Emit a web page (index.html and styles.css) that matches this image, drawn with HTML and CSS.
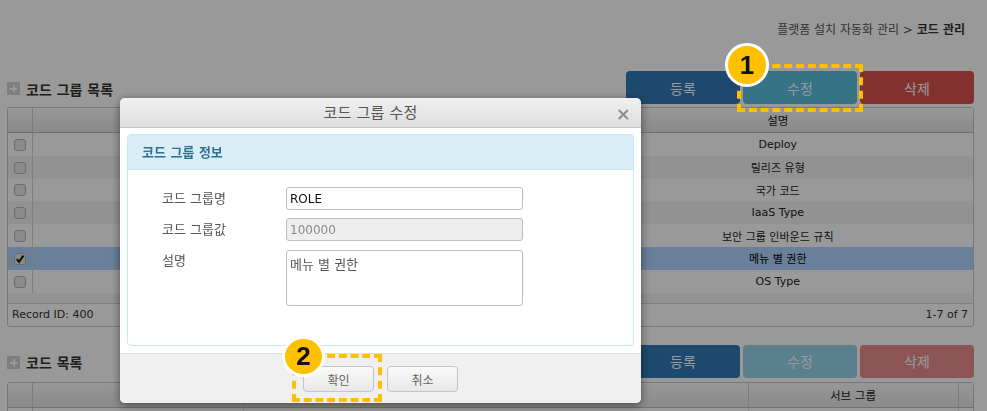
FILE: index.html
```html
<!DOCTYPE html>
<html lang="ko">
<head>
  <meta charset="UTF-8">
  <title>코드 관리</title>
  <link rel="stylesheet" href="styles.css">
</head>
<body>

  <div class="page">
    <div class="breadcrumb">플랫폼 설치 자동화 관리 &gt; <b>코드 관리</b></div>

    <div class="section-head">
      <h2 class="section-title"><span class="plus"></span>코드 그룹 목록</h2>
      <div class="btn-group">
        <button class="btn btn-add">등록</button>
        <button class="btn btn-edit">수정</button>
        <button class="btn btn-del">삭제</button>
      </div>
    </div>

    <div class="grid">
      <table class="grid-table">
        <colgroup>
          <col class="col-check"><col class="col-name"><col class="col-value"><col class="col-desc">
        </colgroup>
        <thead>
          <tr><th></th><th></th><th></th><th>설명</th></tr>
        </thead>
        <tbody>
          <tr><td><span class="check"></span></td><td></td><td></td><td>Deploy</td></tr>
          <tr class="alt"><td><span class="check"></span></td><td></td><td></td><td>릴리즈 유형</td></tr>
          <tr><td><span class="check"></span></td><td></td><td></td><td>국가 코드</td></tr>
          <tr class="alt"><td><span class="check"></span></td><td></td><td></td><td>IaaS Type</td></tr>
          <tr><td><span class="check"></span></td><td></td><td></td><td>보안 그룹 인바운드 규칙</td></tr>
          <tr class="selected">
            <td>
              <span class="check">
                <svg viewBox="0 0 12 12" width="12" height="12"><path d="M2.8 6.2 5 8.8 9.4 2.6" fill="none" stroke="#111" stroke-width="2"/></svg>
              </span>
            </td>
            <td></td><td></td><td>메뉴 별 권한</td>
          </tr>
          <tr><td><span class="check"></span></td><td></td><td></td><td>OS Type</td></tr>
        </tbody>
      </table>
      <div class="grid-filler"></div>
      <div class="grid-footer"><span>Record ID: 400</span><span>1-7 of 7</span></div>
    </div>

    <div class="section-head section-second">
      <h2 class="section-title"><span class="plus"></span>코드 목록</h2>
      <div class="btn-group">
        <button class="btn btn-add">등록</button>
        <button class="btn btn-edit btn-off">수정</button>
        <button class="btn btn-del btn-off">삭제</button>
      </div>
    </div>

    <div class="grid">
      <table class="grid-table">
        <colgroup>
          <col class="col-check"><col class="col-code"><col class="col-code-name"><col class="col-sub"><col class="col-scroll">
        </colgroup>
        <thead>
          <tr><th></th><th></th><th></th><th>서브 그룹</th><th></th></tr>
        </thead>
        <tbody>
          <tr><td></td><td></td><td></td><td></td><td></td></tr>
        </tbody>
      </table>
    </div>
  </div>

  <div class="overlay"></div>

  <div class="modal">
    <div class="modal-title">코드 그룹 수정<span class="modal-close">&times;</span></div>
    <div class="modal-body">
      <div class="panel">
        <div class="panel-head">코드 그룹 정보</div>
        <div class="panel-body">
          <div class="field">
            <label>코드 그룹명</label>
            <input type="text" class="input" value="ROLE">
          </div>
          <div class="field">
            <label>코드 그룹값</label>
            <input type="text" class="input" value="100000" disabled>
          </div>
          <div class="field">
            <label>설명</label>
            <textarea class="input input-area">메뉴 별 권한</textarea>
          </div>
        </div>
      </div>
    </div>
    <div class="modal-foot">
      <button class="btn-plain">확인</button>
      <button class="btn-plain">취소</button>
    </div>
  </div>

  <div class="mark mark-one"></div>
  <div class="badge badge-one">1</div>
  <div class="mark mark-two"></div>
  <div class="badge badge-two">2</div>

</body>
</html>
```

FILE: styles.css
```css
html, body {
  height: 100%;
  margin: 0;
  overflow: hidden;
}
body {
  font-family: "DejaVu Sans", "Noto Sans CJK KR", sans-serif;
  font-size: 11px;
  color: #333;
  background: #fff;
}
.page {
  box-sizing: border-box;
  height: 100%;
  overflow: hidden;
  padding: 22px 13px 0 7px;
}
.breadcrumb {
  height: 16px;
  line-height: 17px;
  font-size: 12px;
  text-align: right;
  padding-right: 9px;
  color: #555;
}
.breadcrumb b {
  color: #333;
}
.section-head {
  display: flex;
  justify-content: space-between;
  align-items: center;
  margin-top: 33px;
  margin-bottom: 3px;
}
.section-second {
  margin-top: 18px;
  margin-bottom: 4px;
}
.section-title {
  display: flex;
  align-items: center;
  gap: 6px;
  margin: 0;
  font-size: 14px;
  font-weight: 700;
  color: #333;
  padding-top: 2px;
}
.plus {
  position: relative;
  width: 13px;
  height: 13px;
  background: #d2d2d2;
}
.plus::before,
.plus::after {
  content: "";
  position: absolute;
  background: #fff;
}
.plus::before {
  left: 3px;
  top: 6px;
  width: 7px;
  height: 2px;
}
.plus::after {
  left: 6px;
  top: 3px;
  width: 2px;
  height: 7px;
}
.btn-group {
  display: flex;
  gap: 3px;
}
.btn {
  width: 114px;
  height: 33px;
  padding: 0;
  border: 1px solid transparent;
  border-radius: 4px;
  font-family: inherit;
  font-size: 14px;
  color: #fff;
}
.btn-add {
  background: #337ab7;
}
.btn-edit {
  background: #5bc0de;
}
.btn-del {
  background: #d9534f;
}
.btn-off {
  opacity: 0.65;
}
.grid {
  border: 1px solid #c9c9c9;
  border-radius: 3px;
  background: #fff;
}
.grid-table {
  width: 100%;
  table-layout: fixed;
  border-collapse: collapse;
}
.col-check {
  width: 24px;
}
.col-name {
  width: 270px;
}
.col-value {
  width: 280px;
}
.col-code {
  width: 211px;
}
.col-code-name {
  width: 505px;
}
.col-sub {
  width: 210px;
}
.grid-table th {
  height: 24px;
  padding: 0;
  font-size: 11.5px;
  font-weight: 400;
  color: #111;
  background: linear-gradient(#fcfcfc, #e6e6e6);
  border-right: 1px solid #cfcfcf;
  border-bottom: 1px solid #bdbdbd;
}
.grid-table th:last-child {
  border-right: 0;
}
.grid-table td {
  height: 22.8px;
  padding: 0;
  text-align: center;
  color: #222;
  border-right: 1px solid #e4e4e4;
}
.grid-table td:first-child {
  border-right: 1px solid #d4d4d4;
}
.grid-table td:last-child {
  border-right: 0;
}
.alt td {
  background: #f4f4f6;
}
.selected td {
  background: #b1d4ff;
  color: #000;
}
.check {
  display: inline-block;
  width: 12px;
  height: 12px;
  vertical-align: middle;
  box-sizing: border-box;
  border: 1px solid #b4b4b4;
  border-radius: 3px;
  background: #e6e6e6;
  line-height: 0;
}
.check svg {
  margin: -1px;
}
.grid-filler {
  height: 10px;
  background: #f4f4f6;
}
.grid-footer {
  display: flex;
  justify-content: space-between;
  height: 22px;
  line-height: 21px;
  padding: 0 5px 0 4px;
  color: #333;
  border-top: 1px solid #d4d4d4;
}

.overlay {
  position: fixed;
  inset: 0;
  background: rgba(0, 0, 0, 0.4);
}

.modal {
  position: fixed;
  left: 120px;
  top: 98px;
  width: 521px;
  height: 305px;
  display: flex;
  flex-direction: column;
  background: #fff;
  border-radius: 5px;
  box-shadow: 0 2px 10px rgba(0, 0, 0, 0.5);
  overflow: hidden;
}
.modal-title {
  position: relative;
  flex: none;
  height: 29px;
  line-height: 31px;
  padding-right: 20px;
  text-align: center;
  font-size: 15px;
  letter-spacing: 0.2px;
  color: #555;
  background: linear-gradient(#f0f0f0, #dedede);
  border-bottom: 1px solid #c4c4c4;
}
.modal-close {
  position: absolute;
  right: 10px;
  top: 0;
  font-size: 18px;
  font-weight: 700;
  color: #8a9299;
}
.modal-body {
  flex: 1;
  padding: 6px 7px;
}
.panel {
  box-sizing: border-box;
  height: 212px;
  border: 1px solid #c6e9f2;
  border-radius: 4px;
}
.panel-head {
  height: 34px;
  line-height: 36px;
  padding-left: 14px;
  font-size: 13px;
  font-weight: 700;
  color: #31708f;
  background: #d9edf7;
  border-bottom: 1px solid #c6e9f2;
}
.panel-body {
  padding: 17px 0 0 34px;
}
.field {
  display: flex;
  margin-bottom: 8px;
}
.field label {
  width: 124px;
  height: 23px;
  font-size: 13px;
  line-height: 24px;
  color: #555;
}
.input {
  box-sizing: border-box;
  width: 237px;
  height: 23px;
  margin: 0;
  padding: 0 3px;
  border: 1px solid #bdbdbd;
  border-radius: 3px;
  font-family: inherit;
  font-size: 12px;
  color: #111;
  background: #fff;
}
.input:disabled {
  color: #888;
  background: #eee;
}
.input-area {
  height: 56px;
  margin-top: 1px;
  padding: 3px;
  font-size: 13px;
  color: #555;
  resize: none;
}
.modal-foot {
  flex: none;
  box-sizing: border-box;
  height: 50px;
  display: flex;
  justify-content: center;
  gap: 13px;
  padding-top: 12px;
  background: #f0f0f0;
  border-top: 1px solid #ddd;
}
.btn-plain {
  width: 71px;
  height: 26px;
  padding: 0;
  border: 1px solid #c4c4c4;
  border-radius: 4px;
  font-family: inherit;
  font-size: 12px;
  color: #666;
  background: linear-gradient(#fafafa, #e8e8e8);
}

.mark {
  position: fixed;
  box-sizing: border-box;
  border: 4px dashed #ffc000;
}
.mark-one {
  left: 737px;
  top: 64px;
  width: 126px;
  height: 48px;
}
.mark-two {
  left: 292px;
  top: 354px;
  width: 90px;
  height: 48px;
}
.badge {
  position: fixed;
  box-sizing: border-box;
  display: flex;
  align-items: center;
  justify-content: center;
  border: 3px solid #fff;
  border-radius: 50%;
  background: #ffc000;
  font-family: "Liberation Sans", sans-serif;
  font-weight: 700;
  color: #111;
}
.badge-one {
  left: 725px;
  top: 43px;
  width: 44px;
  height: 44px;
  font-size: 26px;
}
.badge-two {
  left: 282px;
  top: 336px;
  width: 43px;
  height: 41px;
  font-size: 26px;
}
```
